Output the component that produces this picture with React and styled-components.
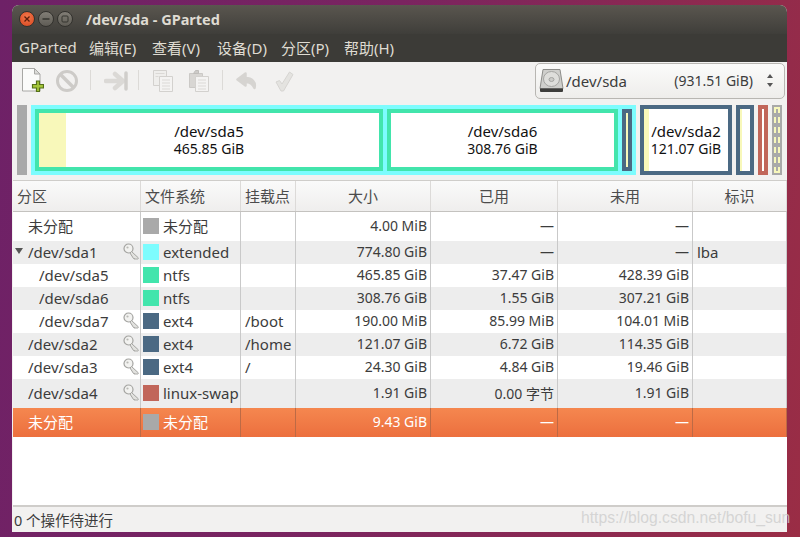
import React from 'react'
import styled, { createGlobalStyle } from 'styled-components'

const FONT = '"Noto Sans", "Noto Sans CJK SC", sans-serif'
const COLUMNS = '128px 100px 55px 135px 127px 135px 1fr'

const GlobalStyle = createGlobalStyle`
  html, body {
    margin: 0;
    padding: 0;
    height: 537px;
    overflow: hidden;
    background: linear-gradient(100deg, #6e2167 0%, #7a2460 45%, #9a2d45 100%);
  }
  * { box-sizing: border-box; }
`

const Stage = styled.div`
  position: relative;
  width: 800px;
  height: 537px;
  padding: 5px 13px 5px 12px;
  font-family: ${FONT};
`

const Window = styled.div`
  display: flex;
  flex-direction: column;
  height: 527px;
  border-radius: 7px 7px 0 0;
  overflow: hidden;
  background: #f2f1f0;
`

const TitleBar = styled.div`
  display: flex;
  align-items: center;
  height: 29px;
  padding-left: 7px;
  padding-bottom: 1px;
  background: linear-gradient(#5a564f, #3f3e3a);
`

const WinButton = styled.span`
  display: flex;
  align-items: center;
  justify-content: center;
  width: 16px;
  height: 16px;
  margin-right: 3px;
  border-radius: 50%;
  border: 1px solid #33322e;
  background: ${p => p.$close ? 'radial-gradient(circle at 50% 35%, #f2784b, #d8461f)' : 'linear-gradient(#827e76, #5f5c55)'};
`

const Title = styled.span`
  margin-left: 10px;
  font-size: 14.5px;
  font-weight: 700;
  color: #dfdbd2;
`

const MenuBar = styled.div`
  display: flex;
  align-items: center;
  height: 28px;
  padding-left: 7px;
  padding-bottom: 2px;
  background: #3c3b37;
`

const MenuItem = styled.span`
  width: ${p => p.$w}px;
  font-size: 15px;
  color: #dfdbd2;
`

const Toolbar = styled.div`
  display: flex;
  align-items: flex-start;
  height: 42px;
  padding-left: 10px;
  padding-right: 2px;
  padding-top: 1px;
`

const ToolIcon = styled.svg`
  display: block;
  flex: none;
  margin-top: ${p => p.$top}px;
  margin-right: ${p => p.$gap}px;
`

const ToolSep = styled.span`
  width: 1px;
  height: 20px;
  margin-top: 7px;
  margin-right: ${p => p.$gap}px;
  background: #dcdad7;
`

const DeviceSelect = styled.div`
  display: flex;
  align-items: center;
  width: 250px;
  height: 36px;
  margin-left: auto;
  padding: 0 11px 1px 3px;
  border: 1px solid #b8b6b2;
  border-radius: 5px;
  background: linear-gradient(#fbfbfa, #eeedeb);
  font-size: 15px;
  color: #3c3c3c;
`

const DeviceName = styled.span`
  margin-left: 2px;
`

const DeviceSize = styled.span`
  margin-left: auto;
  margin-right: 14px;
  font-size: 14px;
`

const Arrows = styled.span`
  display: flex;
  flex-direction: column;
  gap: 5px;
`

const Arrow = styled.span`
  width: 0;
  height: 0;
  border-left: 3px solid transparent;
  border-right: 3px solid transparent;
  ${p => p.$up ? 'border-bottom: 4px solid #555;' : 'border-top: 4px solid #555;'}
`

const PartBar = styled.div`
  display: flex;
  gap: 4px;
  height: 70px;
  margin-top: 1px;
  padding-left: 5px;
`

const Unallocated = styled.div`
  flex: none;
  width: ${p => p.$w}px;
  background: #a9a9a9;
`

const DottedUnallocated = styled.div`
  flex: none;
  width: 10px;
  padding: 2px;
  background: #a9a9a9;
`

const Dots = styled.div`
  height: 100%;
  border: 2px dashed #f7f7bb;
  border-left-width: 2px;
  border-right-width: 2px;
`

const Extended = styled.div`
  display: flex;
  gap: 4px;
  flex: none;
  width: 605px;
  padding: 4px;
  background: #7dfcfe;
`

const Partition = styled.div`
  position: relative;
  display: flex;
  flex: none;
  width: ${p => p.$w}px;
  border: ${p => p.$border}px solid ${p => p.$color};
  background: #fff;
`

const UsedPart = styled.div`
  flex: none;
  width: ${p => p.$w}px;
  background: #f8f8ba;
`

const PartLabel = styled.div`
  position: absolute;
  inset: 0;
  display: flex;
  flex-direction: column;
  align-items: center;
  justify-content: center;
  font-size: 15px;
  line-height: 17px;
  color: #111;
`

const PartSize = styled.span`
  font-size: 14px;
`

const Table = styled.div`
  flex: 1;
  margin-top: 5px;
  margin-left: 1px;
  background: #fff;
  border-top: 1px solid #cfcdca;
  border-bottom: 2px solid #cfcdca;
`

const HeaderRow = styled.div`
  display: grid;
  grid-template-columns: ${COLUMNS};
  height: 31px;
  border-bottom: 1px solid #c4c2bf;
  background: linear-gradient(#fafafa, #efeeed);
`

const HeaderCell = styled.div`
  display: flex;
  align-items: center;
  justify-content: ${p => p.$center ? 'center' : 'flex-start'};
  padding-left: ${p => p.$center ? 0 : 4}px;
  padding-bottom: 2px;
  border-right: 1px solid #dcdad8;
  font-size: 15px;
  color: #4c4c4c;
`

const Row = styled.div`
  display: grid;
  grid-template-columns: ${COLUMNS};
  height: ${p => p.$h}px;
  font-size: 15px;
  color: ${p => p.$selected ? '#fff' : '#3c3c3c'};
  background: ${p => p.$selected ? 'linear-gradient(#f5874f, #ec6f3e)' : p.$alt ? '#ededed' : '#fff'};
`

const Cell = styled.div`
  display: flex;
  align-items: center;
  justify-content: flex-start;
  padding: 0 0 2px 4px;
  border-right: 1px solid ${p => p.$selected ? '#bd6a45' : '#c9c9c9'};
  white-space: nowrap;
`

const NumCell = styled(Cell)`
  justify-content: flex-end;
  padding: 0 3px 2px 0;
  font-size: 14px;
`

const NameCell = styled(Cell)`
  position: relative;
  padding-left: ${p => p.$indent}px;
`

const Expander = styled.span`
  position: absolute;
  left: 2px;
  top: 7px;
  width: 0;
  height: 0;
  border-left: 4px solid transparent;
  border-right: 4px solid transparent;
  border-top: 6px solid #555;
`

const KeySlot = styled.svg`
  position: absolute;
  right: 0;
  top: 50%;
  margin-top: -10px;
`

const Swatch = styled.span`
  flex: none;
  width: 16px;
  height: 16px;
  margin: 1px 4px 0 -2px;
  background: ${p => p.$color};
`

const StatusBar = styled.div`
  display: flex;
  align-items: center;
  height: 25px;
  padding-left: 2px;
  font-size: 14.5px;
  color: #3c3c3c;
`

const Watermark = styled.span`
  position: absolute;
  left: 581px;
  top: 509px;
  font-family: "Liberation Sans", sans-serif;
  font-size: 15.7px;
  color: rgba(205, 205, 205, 0.8);
`

const NewIcon = () => (
  <ToolIcon $top={5} $gap={11} width="22" height="25" viewBox="0 0 22 25">
    <path d="M0.500 0.500h12l5.500 5.500v17h-17.500z" fill="#fbfbfa" stroke="#a8a8a5" />
    <path d="M12.500 0.500v5.500h5.500z" fill="#dcdcd9" stroke="#a8a8a5" />
    <path d="M10.500 16.500h4v-3.500h3v3.500h4v3.500h-4v3.500h-3v-3.500h-4z" fill="#a4c639" stroke="#55701a" strokeWidth="1.200" />
  </ToolIcon>
)

const DeleteIcon = () => (
  <ToolIcon $top={6} $gap={11} width="24" height="24" viewBox="0 0 24 24">
    <circle cx="12" cy="12" r="9.500" fill="none" stroke="#cdcbc8" strokeWidth="3" />
    <path d="M5.500 5.500l13 13" stroke="#cdcbc8" strokeWidth="3.500" />
  </ToolIcon>
)

const ApplyArrowIcon = () => (
  <ToolIcon $top={7} $gap={8} width="26" height="22" viewBox="0 0 26 22">
    <path d="M2 11h14M11 4l8 7-8 7" fill="none" stroke="#dbd9d6" strokeWidth="4.500" strokeLinejoin="round" strokeLinecap="round" />
    <path d="M22 3v16" stroke="#d0cecb" strokeWidth="3.500" strokeLinecap="round" />
  </ToolIcon>
)

const CopyIcon = () => (
  <ToolIcon $top={7} $gap={16} width="20" height="22" viewBox="0 0 20 22">
    <path d="M0.500 0.500h13v15h-13z" fill="#efeeec" stroke="#d3d1ce" />
    <path d="M6.500 6.500h13v15h-13z" fill="#f4f3f2" stroke="#d3d1ce" />
    <path d="M2.500 3.500h9M2.500 6.500h3M9 10h8M9 13h8M9 16h8M9 19h8" stroke="#dbd9d6" />
  </ToolIcon>
)

const PasteIcon = () => (
  <ToolIcon $top={7} $gap={13} width="20" height="22" viewBox="0 0 20 22">
    <path d="M0.500 3.500h13v14h-13z" fill="#d8d6d3" stroke="#cbc9c6" />
    <path d="M4.500 3.500h5v-3h-3z" fill="#cdcbc8" stroke="#bfbdba" />
    <path d="M6.500 6.500h13v15h-13z" fill="#f4f3f2" stroke="#d3d1ce" />
    <path d="M9 10h8M9 13h8M9 16h8M9 19h8" stroke="#dbd9d6" />
  </ToolIcon>
)

const UndoIcon = () => (
  <ToolIcon $top={9} $gap={17} width="22" height="18" viewBox="0 0 22 18">
    <path d="M9.500 1.500L1.500 7.500l8 6v-3.500c4 0 7 1.500 9 6 1.500-6-2.500-10-9-10z" fill="#d6d4d1" stroke="#d6d4d1" strokeWidth="2.500" strokeLinejoin="round" />
  </ToolIcon>
)

const CheckIcon = () => (
  <ToolIcon $top={8} $gap={0} width="19" height="21" viewBox="0 0 19 21">
    <path d="M1 11l3.500-1.500 2.500 3.500 7.500-12 3.500 2.500-9.500 16.500h-2.500z" fill="#e4e3e0" stroke="#d6d4d1" strokeLinejoin="round" />
  </ToolIcon>
)

const DiskIcon = () => (
  <svg width="25" height="25" viewBox="0 0 25 25">
    <path d="M4 1.500h17l3 19h-23z" fill="#cfcfcc" stroke="#8d8d8a" />
    <ellipse cx="12.500" cy="11" rx="8" ry="7.500" fill="#dededb" stroke="#a5a5a2" />
    <ellipse cx="12.500" cy="11.500" rx="2.500" ry="2" fill="#cbcbc8" stroke="#a5a5a2" />
    <path d="M1 20.500h23v2.500a1 1 0 0 1-1 1h-21a1 1 0 0 1-1-1z" fill="#3d3d3b" />
  </svg>
)

const KeyIcon = () => (
  <KeySlot width="17" height="18" viewBox="0 0 17 18">
    <circle cx="5.500" cy="5.500" r="4.500" fill="#f2f2f0" stroke="#a3a3a0" strokeWidth="1.200" />
    <circle cx="4.500" cy="4.500" r="1.100" fill="#b9b9b6" />
    <path d="M8.500 8.500l7 6.500-1.500 1.500-1-1-1 1-1-1.500-.5.500-3.500-5.500z" fill="#e2e2df" stroke="#a3a3a0" />
  </KeySlot>
)

const menu = [
  ['GParted', 70], ['编辑(E)', 63], ['查看(V)', 65], ['设备(D)', 64], ['分区(P)', 63], ['帮助(H)', 60]
]

const columns = [
  ['分区'], ['文件系统'], ['挂载点'], ['大小', true], ['已用', true], ['未用', true], ['标识', true]
]

const UNALLOC = '#a9a9a9'
const EXT4 = '#4b6983'
const NTFS = '#42e5ac'

const rows = [
  { h: 29, name: '未分配', indent: 15, color: UNALLOC, fs: '未分配', size: '4.00 MiB', used: '—', free: '—' },
  { h: 23, name: '/dev/sda1', indent: 15, expander: true, key: true, color: '#7dfcfe', fs: 'extended', size: '774.80 GiB', used: '—', free: '—', flags: 'lba', alt: true },
  { h: 23, name: '/dev/sda5', indent: 26, color: NTFS, fs: 'ntfs', size: '465.85 GiB', used: '37.47 GiB', free: '428.39 GiB' },
  { h: 23, name: '/dev/sda6', indent: 26, color: NTFS, fs: 'ntfs', size: '308.76 GiB', used: '1.55 GiB', free: '307.21 GiB', alt: true },
  { h: 23, name: '/dev/sda7', indent: 26, key: true, color: EXT4, fs: 'ext4', mount: '/boot', size: '190.00 MiB', used: '85.99 MiB', free: '104.01 MiB' },
  { h: 23, name: '/dev/sda2', indent: 15, key: true, color: EXT4, fs: 'ext4', mount: '/home', size: '121.07 GiB', used: '6.72 GiB', free: '114.35 GiB', alt: true },
  { h: 23, name: '/dev/sda3', indent: 15, key: true, color: EXT4, fs: 'ext4', mount: '/', size: '24.30 GiB', used: '4.84 GiB', free: '19.46 GiB' },
  { h: 29, name: '/dev/sda4', indent: 15, key: true, color: '#c1665a', fs: 'linux-swap', size: '1.91 GiB', used: '0.00 字节', free: '1.91 GiB', alt: true },
  { h: 29, name: '未分配', indent: 15, color: UNALLOC, fs: '未分配', size: '9.43 GiB', used: '—', free: '—', selected: true }
]

const App = () => (
  <Stage>
    <GlobalStyle />
    <Window>
      <TitleBar>
        <WinButton $close>
          <svg width="8" height="8" viewBox="0 0 8 8">
            <path d="M1.500 1.500l5 5M6.500 1.500l-5 5" stroke="#5a1d0c" strokeWidth="1.300" />
          </svg>
        </WinButton>
        <WinButton>
          <svg width="8" height="8" viewBox="0 0 8 8">
            <path d="M0.500 4h7" stroke="#35342f" strokeWidth="1.300" />
          </svg>
        </WinButton>
        <WinButton>
          <svg width="8" height="8" viewBox="0 0 8 8">
            <rect x="1" y="1" width="6" height="6" rx="1" fill="none" stroke="#35342f" />
          </svg>
        </WinButton>
        <Title>/dev/sda - GParted</Title>
      </TitleBar>
      <MenuBar>
        {menu.map(([label, w]) => <MenuItem key={label} $w={w}>{label}</MenuItem>)}
      </MenuBar>
      <Toolbar>
        <NewIcon />
        <DeleteIcon />
        <ToolSep $gap={13} />
        <ApplyArrowIcon />
        <ToolSep $gap={14} />
        <CopyIcon />
        <PasteIcon />
        <ToolSep $gap={13} />
        <UndoIcon />
        <CheckIcon />
        <DeviceSelect>
          <DiskIcon />
          <DeviceName>/dev/sda</DeviceName>
          <DeviceSize>(931.51 GiB)</DeviceSize>
          <Arrows><Arrow $up /><Arrow /></Arrows>
        </DeviceSelect>
      </Toolbar>
      <PartBar>
        <Unallocated $w={10} />
        <Extended>
          <Partition $w={348} $border={4} $color={NTFS}>
            <UsedPart $w={27} />
            <PartLabel><span>/dev/sda5</span><PartSize>465.85 GiB</PartSize></PartLabel>
          </Partition>
          <Partition $w={231} $border={4} $color={NTFS}>
            <PartLabel><span>/dev/sda6</span><PartSize>308.76 GiB</PartSize></PartLabel>
          </Partition>
          <Partition $w={10} $border={4} $color={EXT4}>
            <UsedPart $w={2} />
          </Partition>
        </Extended>
        <Partition $w={92} $border={4} $color={EXT4}>
          <UsedPart $w={5} />
          <PartLabel><span>/dev/sda2</span><PartSize>121.07 GiB</PartSize></PartLabel>
        </Partition>
        <Partition $w={18} $border={4} $color={EXT4}>
          <UsedPart $w={2} />
        </Partition>
        <Partition $w={10} $border={4} $color="#c1665a" />
        <DottedUnallocated><Dots /></DottedUnallocated>
      </PartBar>
      <Table>
        <HeaderRow>
          {columns.map(([label, center]) => <HeaderCell key={label} $center={center}>{label}</HeaderCell>)}
        </HeaderRow>
        {rows.map(r => (
          <Row key={r.name + r.size} $h={r.h} $alt={r.alt} $selected={r.selected}>
            <NameCell $indent={r.indent} $selected={r.selected}>
              {r.expander && <Expander />}
              {r.name}
              {r.key && <KeyIcon />}
            </NameCell>
            <Cell $selected={r.selected}><Swatch $color={r.color} />{r.fs}</Cell>
            <Cell $selected={r.selected}>{r.mount}</Cell>
            <NumCell $selected={r.selected}>{r.size}</NumCell>
            <NumCell $selected={r.selected}>{r.used}</NumCell>
            <NumCell $selected={r.selected}>{r.free}</NumCell>
            <Cell $selected={r.selected}>{r.flags}</Cell>
          </Row>
        ))}
      </Table>
      <StatusBar>0 个操作待进行</StatusBar>
    </Window>
    <Watermark>https://blog.csdn.net/bofu_sun</Watermark>
  </Stage>
)

export default App
